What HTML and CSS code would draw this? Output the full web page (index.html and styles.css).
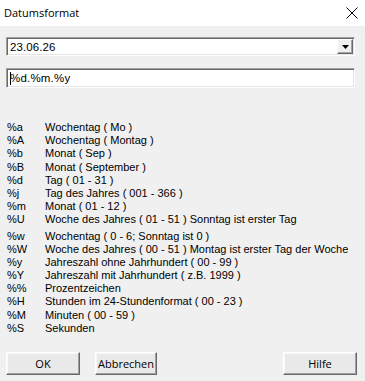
FILE: index.html
```html
<!DOCTYPE html>
<html>
<head>
<meta charset="UTF-8">
<title>Datumsformat</title>
<link rel="stylesheet" href="styles.css">
</head>
<body>
<div class="dialog">
	<div class="titlebar">
		<span class="title_text">Datumsformat</span>
		<svg class="close_x" width="12" height="12" viewBox="0 0 12 12">
			<path d="M0.5 0.5 L11.5 11.5 M11.5 0.5 L0.5 11.5" stroke="#000" stroke-width="1" fill="none"/>
		</svg>
	</div>

	<div class="content">
		<div class="combo">
			<span class="combo_text">23.06.26</span>
			<div class="combo_btn">
				<svg width="7" height="4" viewBox="0 0 7 4"><path d="M0 0 L7 0 L3.5 4 Z" fill="#000"/></svg>
			</div>
		</div>

		<div class="edit">
			<span class="caret"></span><span class="edit_text">%d.%m.%y</span>
		</div>

		<div class="help_list">
			<div class="row"><span class="code">%a</span><span>Wochentag ( Mo )</span></div>
			<div class="row"><span class="code">%A</span><span>Wochentag ( Montag )</span></div>
			<div class="row"><span class="code">%b</span><span>Monat ( Sep )</span></div>
			<div class="row"><span class="code">%B</span><span>Monat ( September )</span></div>
			<div class="row"><span class="code">%d</span><span>Tag ( 01 - 31 )</span></div>
			<div class="row"><span class="code">%j</span><span>Tag des Jahres ( 001 - 366 )</span></div>
			<div class="row"><span class="code">%m</span><span>Monat ( 01 - 12 )</span></div>
			<div class="row"><span class="code">%U</span><span>Woche des Jahres ( 01 - 51 ) Sonntag ist erster Tag</span></div>
			<div class="row gap"><span class="code">%w</span><span>Wochentag ( 0 - 6; Sonntag ist 0 )</span></div>
			<div class="row"><span class="code">%W</span><span>Woche des Jahres ( 00 - 51 ) Montag ist erster Tag der Woche</span></div>
			<div class="row"><span class="code">%y</span><span>Jahreszahl ohne Jahrhundert ( 00 - 99 )</span></div>
			<div class="row"><span class="code">%Y</span><span>Jahreszahl mit Jahrhundert ( z.B. 1999 )</span></div>
			<div class="row"><span class="code">%%</span><span>Prozentzeichen</span></div>
			<div class="row"><span class="code">%H</span><span>Stunden im 24-Stundenformat ( 00 - 23 )</span></div>
			<div class="row"><span class="code">%M</span><span>Minuten ( 00 - 59 )</span></div>
			<div class="row"><span class="code">%S</span><span>Sekunden</span></div>
		</div>

		<div class="buttons">
			<div class="btn btn_ok">OK</div>
			<div class="btn btn_cancel">Abbrechen</div>
			<div class="spacer"></div>
			<div class="btn btn_help">Hilfe</div>
		</div>
	</div>
</div>
</body>
</html>
```

FILE: styles.css
```css
*{
	margin:0;
	padding:0;
	box-sizing:border-box;
}
body{
	background-color:#f0f0f0;
	font-family:"Liberation Sans", Arial, sans-serif;
	font-size:11px;
	color:#000;
}
.dialog{
	width:365px;
	height:381px;
	display:flex;
	flex-direction:column;
	background-color:#f0f0f0;
}
.titlebar{
	height:26px;
	background-color:#fff;
	display:flex;
	align-items:center;
	justify-content:space-between;
	padding:0 7px 0 4px;
}
.title_text{
	font-family:"Open Sans", "Noto Sans", sans-serif;
	font-size:11px;
	color:#000;
	margin-top:-2px;
}
.close_x{
	display:block;
	margin-top:-1px;
}
.content{
	padding:11px 10px 0 6px;
	display:flex;
	flex-direction:column;
	flex:1;
}
.combo{
	height:19px;
	background-color:#fff;
	border-top:1px solid #a0a0a0;
	border-left:1px solid #a0a0a0;
	border-bottom:1px solid #fff;
	border-right:1px solid #fff;
	box-shadow:inset 1px 1px 0 #696969, inset -1px -1px 0 #e3e3e3;
	display:flex;
	align-items:center;
	justify-content:space-between;
	padding:1px 1px 1px 3px;
}
.combo_text{
	font-size:11.5px;
	letter-spacing:0.1px;
}
.combo_btn{
	width:16px;
	height:15px;
	background-color:#f0f0f0;
	border-top:1px solid #fff;
	border-left:1px solid #fff;
	border-bottom:1px solid #696969;
	border-right:1px solid #696969;
	box-shadow:inset -1px -1px 0 #a0a0a0;
	display:flex;
	align-items:center;
	justify-content:center;
}
.combo_btn svg{
	display:block;
	margin-top:1px;
}
.edit{
	margin-top:12px;
	height:20px;
	background-color:#fff;
	border-top:1px solid #a0a0a0;
	border-left:1px solid #a0a0a0;
	border-bottom:1px solid #fff;
	border-right:1px solid #fff;
	box-shadow:inset 1px 1px 0 #696969, inset -1px -1px 0 #e3e3e3;
	display:flex;
	align-items:center;
	padding-left:3px;
}
.caret{
	width:1px;
	height:13px;
	background-color:#000;
	margin-right:-1px;
}
.edit_text{
	font-size:11.5px;
	letter-spacing:0.2px;
}
.help_list{
	margin-top:33px;
	padding-left:1px;
}
.row{
	display:flex;
	height:13.2px;
	line-height:13px;
	white-space:nowrap;
}
.row.gap{
	margin-top:3px;
}
.code{
	width:38px;
}
.buttons{
	margin-top:17px;
	display:flex;
	align-items:flex-start;
}
.btn{
	height:23px;
	background-color:#e9e9e9;
	border-top:1px solid #fff;
	border-left:1px solid #fff;
	border-bottom:1px solid #696969;
	border-right:1px solid #696969;
	box-shadow:inset -1px -1px 0 #a0a0a0, inset 1px 1px 0 #f8f8f8;
	display:flex;
	align-items:center;
	justify-content:center;
	font-family:"Open Sans", "Noto Sans", sans-serif;
	font-size:11px;
}
.btn_ok{
	width:74px;
}
.btn_cancel{
	width:62px;
	margin-left:15px;
}
.spacer{
	flex:1;
}
.btn_help{
	width:74px;
	margin-right:-2px;
}
```
